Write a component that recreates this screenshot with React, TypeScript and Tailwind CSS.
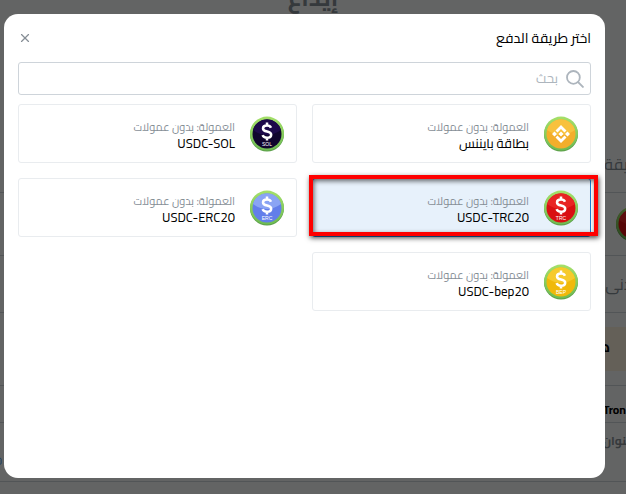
import { Copy, X } from "lucide-react";

type Method = {
  id: string;
  name: string;
  coin: string;
  shine: string;
  label?: string;
};

const methods: Method[] = [
  { id: "binance", name: "بطاقة بايننس", coin: "#f3ae2b", shine: "#f8c13d" },
  { id: "sol", name: "USDC-SOL", coin: "#10052e", shine: "#1d0a4a", label: "SOL" },
  { id: "trc", name: "USDC-TRC20", coin: "#d90f12", shine: "#e82424", label: "TRC" },
  { id: "erc", name: "USDC-ERC20", coin: "#627eea", shine: "#8aa4f4", label: "ERC" },
  { id: "bep", name: "USDC-bep20", coin: "#f0b90b", shine: "#f6ca2c", label: "BEP" },
];

function Coin({ id, coin, shine, label }: Omit<Method, "name">) {
  return (
    <svg viewBox="0 0 34 36" className="h-9 w-[34px] shrink-0" aria-hidden="true">
      <defs>
        <linearGradient id={`rim-${id}`} x1="0" y1="0" x2="0" y2="1">
          <stop offset="0" stopColor="#a5e06a" />
          <stop offset="1" stopColor="#6dbb52" />
        </linearGradient>
      </defs>
      <circle cx="17" cy="18.6" r="17" fill="#5a9e48" />
      <circle cx="17" cy="17.6" r="17" fill={`url(#rim-${id})`} />
      <circle cx="17" cy="18" r="14.5" fill={coin} />
      <path d="M3 14a14.5 14.5 0 0 1 28 0Q17 24 3 14Z" fill={shine} />
      {label ? (
        <>
          <path
            d="M21 11.7c-.6-1.5-2-2.200-4-2.200-2.300 0-4 1-4 2.900 0 4.300 8.200 2 8.200 6.300 0 2-1.800 3-4.200 3-2.200 0-3.800-.9-4.400-2.600M17 6.500v3M17 21.500v3"
            fill="none"
            stroke="#fff"
            strokeWidth="2.5"
          />
          <text x="17" y="30" textAnchor="middle" fontSize="5" fontFamily="Liberation Sans, sans-serif" fill="#fff">
            {label}
          </text>
        </>
      ) : (
        <g fill="#fff">
          <path d="M17 9l5.500 5.500-2 2-3.500-3.500-3.500 3.500-2-2z" />
          <path d="M17 27l5.500-5.500-2-2-3.500 3.500-3.500-3.500-2 2z" />
          <path d="M17 15.500l2.500 2.500-2.500 2.500-2.500-2.500zM10.500 15.500l2.500 2.500-2.500 2.500-2.500-2.500zM23.500 15.500l2.500 2.500-2.500 2.500-2.500-2.500z" />
        </g>
      )}
    </svg>
  );
}

function SearchIcon() {
  return (
    <svg viewBox="0 0 18 18" className="size-[18px]" fill="none" stroke="#adb5bd" strokeWidth="1.8" aria-hidden="true">
      <circle cx="7.4" cy="7.400" r="6.400" />
      <path d="M12 12l5.500 5.500" />
    </svg>
  );
}

function MethodCard({ method }: { method: Method }) {
  const selected = method.id === "trc";
  return (
    <button
      type="button"
      aria-pressed={selected}
      className={`relative flex h-[59px] items-center gap-[15px] rounded-[3px] border px-3 text-right ${
        selected ? "border-[#1c7ed6] bg-[#e7f1fb]" : "border-[#e9ecef] bg-white"
      }`}
    >
      <Coin {...method} />
      <span className="flex flex-col pt-0.5">
        <span className="text-[11px] leading-4 text-[#868e96]">العمولة: بدون عمولات</span>
        <span className="text-[13px] leading-4 text-black">{method.name}</span>
      </span>
      {selected && (
        <span className="pointer-events-none absolute -top-1 -right-2 bottom-0 -left-1 border-4 border-[#fe0000] shadow-[1px_2px_5px_rgba(0,0,0,0.7),inset_1px_2px_5px_rgba(0,0,0,0.6)]" />
      )}
    </button>
  );
}

function DepositPage() {
  return (
    <main className="h-screen overflow-hidden bg-[#f8faf9] text-[#868e96]">
      <div className="-mr-6 flex flex-col">
        <h1 className="-mt-5 h-[172px] pr-6 text-center text-2xl leading-9 font-bold">إيداع</h1>
        <p className="h-10 pr-1 text-base leading-6">طريقة الدفع</p>
        <div className="flex h-16 items-center border-y border-[#ced4da]">
          <Coin id="current" coin="#d90f12" shine="#e82424" label="TRC" />
        </div>
        <p className="h-14 pt-4 pr-1 text-base leading-6">الأدنى</p>
        <div className="flex h-[74px] items-center border-y border-[#ced4da] pl-4">
          <p className="h-11 w-full bg-[#fbf0dc] pr-10 text-sm leading-10 font-bold text-black">هام</p>
        </div>
        <p className="h-9 pt-3 pr-6 text-xs leading-6 font-bold text-black">Tron</p>
        <div className="flex h-[60px] justify-between border-y border-[#ced4da] pt-2">
          <p className="pr-2 text-xs leading-5 font-bold">العنوان</p>
          <button type="button" aria-label="نسخ" className="-ml-2 self-end pb-4 text-[#228be6]">
            <Copy size={10} />
          </button>
        </div>
      </div>
    </main>
  );
}

export default function App() {
  return (
    <div dir="rtl" className="font-['Cairo','Open_Sans','DejaVu_Sans',sans-serif]">
      <DepositPage />
      <div className="fixed inset-0 flex bg-black/60 pt-[14px] pr-[21px] pb-4 pl-1">
        <section role="dialog" aria-labelledby="dialog-title" className="flex-1 rounded-[14px] bg-white px-[14px]">
          <header className="flex h-12 items-center justify-between">
            <h2 id="dialog-title" className="text-sm text-black">اختر طريقة الدفع</h2>
            <button type="button" aria-label="إغلاق" className="text-[#868e96]">
              <X size={14} strokeWidth={2} />
            </button>
          </header>
          <label className="flex h-[33px] items-center gap-2 rounded-[3px] border border-[#ced4da] px-[6px]">
            <SearchIcon />
            <input type="search" aria-label="بحث" placeholder="بحث" className="min-w-0 flex-1 text-[13px] outline-none placeholder:text-[#adb5bd]" />
          </label>
          <div className="mt-[9px] grid grid-cols-2 gap-[15px]">
            {methods.map((method) => (
              <MethodCard key={method.id} method={method} />
            ))}
          </div>
        </section>
      </div>
    </div>
  );
}
